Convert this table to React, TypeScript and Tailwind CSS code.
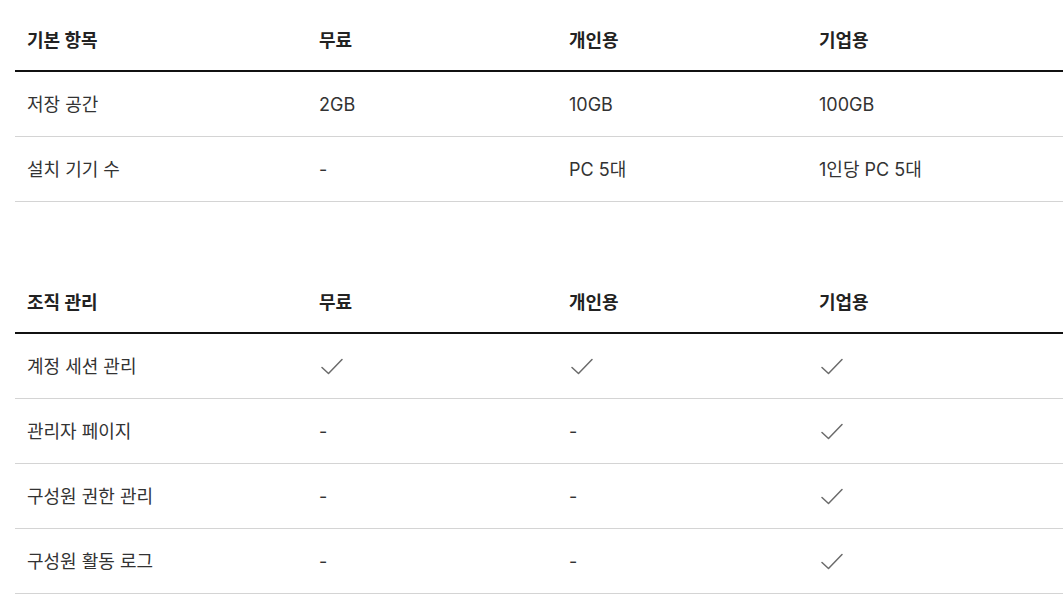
const font = { fontFamily: '"Inter", "Noto Sans CJK KR", sans-serif' };

type Cell = string | boolean;
type Row = [string, Cell, Cell, Cell];

const basic: { title: string; rows: Row[] } = {
  title: '기본 항목',
  rows: [
    ['저장 공간', '2GB', '10GB', '100GB'],
    ['설치 기기 수', '-', 'PC 5대', '1인당 PC 5대'],
  ],
};

const org: { title: string; rows: Row[] } = {
  title: '조직 관리',
  rows: [
    ['계정 세션 관리', true, true, true],
    ['관리자 페이지', '-', '-', true],
    ['구성원 권한 관리', '-', '-', true],
    ['구성원 활동 로그', '-', '-', true],
  ],
};

const Check = () => (
  <svg width="22" height="17" viewBox="0 0 22 17" fill="none" className="ml-[2px]">
    <polyline points="1,9.5 7.5,15.5 21,1.5" stroke="#6b6b6b" strokeWidth="1.5" strokeLinecap="round" strokeLinejoin="round" />
  </svg>
);

const PlanTable = ({ title, rows }: { title: string; rows: Row[] }) => (
  <div className="w-full">
    <div className="grid grid-cols-[292px_250px_250px_1fr] h-[62px] items-center border-b-2 border-[#111] text-[18px] font-bold text-[#222]">
      {[title, '무료', '개인용', '기업용'].map((h) => (
        <div key={h} className="pl-3">{h}</div>
      ))}
    </div>
    {rows.map((r) => (
      <div
        key={r[0]}
        className="grid grid-cols-[292px_250px_250px_1fr] h-[65px] items-center border-b border-[#d4d4d4] text-[18px] text-[#333]"
      >
        {r.map((c, i) => (
          <div key={i} className="pl-3 flex items-center">
            {c === true ? <Check /> : c}
          </div>
        ))}
      </div>
    ))}
  </div>
);

export default function App() {
  return (
    <div className="w-[1063px] h-[609px] bg-white pl-[15px] pt-[10px] overflow-hidden" style={font}>
      <PlanTable {...basic} />
      <div className="mt-[70px]">
        <PlanTable {...org} />
      </div>
    </div>
  );
}
